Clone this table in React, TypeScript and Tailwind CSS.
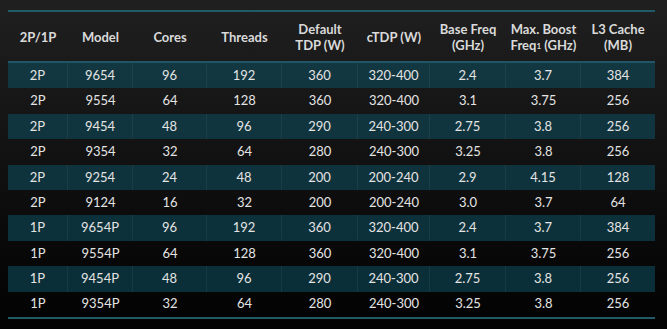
import React from 'react';

// column widths in px, left to right
const widths = [60, 65, 74, 75, 76, 72, 76, 75, 74];

const rows: string[][] = [
  ['2P', '9654', '96', '192', '360', '320-400', '2.4', '3.7', '384'],
  ['2P', '9554', '64', '128', '360', '320-400', '3.1', '3.75', '256'],
  ['2P', '9454', '48', '96', '290', '240-300', '2.75', '3.8', '256'],
  ['2P', '9354', '32', '64', '280', '240-300', '3.25', '3.8', '256'],
  ['2P', '9254', '24', '48', '200', '200-240', '2.9', '4.15', '128'],
  ['2P', '9124', '16', '32', '200', '200-240', '3.0', '3.7', '64'],
  ['1P', '9654P', '96', '192', '360', '320-400', '2.4', '3.7', '384'],
  ['1P', '9554P', '64', '128', '360', '320-400', '3.1', '3.75', '256'],
  ['1P', '9454P', '48', '96', '290', '240-300', '2.75', '3.8', '256'],
  ['1P', '9354P', '32', '64', '280', '240-300', '3.25', '3.8', '256'],
];

const headers: React.ReactNode[] = [
  '2P/1P',
  'Model',
  'Cores',
  'Threads',
  <>Default<br />TDP (W)</>,
  'cTDP (W)',
  <>Base Freq<br />(GHz)</>,
  <>Max. Boost<br />Freq<sup className="text-[8px] relative -top-[1px]">1</sup> (GHz)</>,
  <>L3 Cache<br />(MB)</>,
];

export default function App() {
  return (
    <div
      className="w-[667px] h-[329px] overflow-hidden bg-linear-to-b from-[#202020] via-[#111111] to-[#030303] pl-2 pt-[10px]"
      style={{ fontFamily: 'Lato, "Open Sans", sans-serif' }}
    >
      <div className="w-[647px]">
        <div className="h-[2px] bg-[#1f5a66]" />

        {/* header */}
        <div className="flex h-[51px] items-center border-b-2 border-[#1f5766]">
          {headers.map((h, i) => (
            <div
              key={i}
              style={{ width: widths[i] }}
              className="text-center text-[13px] font-bold leading-[16px] text-[#dadada]"
            >
              {h}
            </div>
          ))}
        </div>

        {/* body */}
        {rows.map((row, r) => {
          const teal = r % 2 === 0;
          return (
            <div
              key={r}
              className={`flex h-[25.4px] items-center ${teal ? 'bg-[#0f4b5a]/60' : ''}`}
            >
              {row.map((cell, c) => (
                <div
                  key={c}
                  style={{ width: widths[c] }}
                  className={`flex h-full items-center justify-center text-[13px] text-[#e4e4e4] ${
                    teal && c < 8 ? 'border-r border-white/5' : ''
                  }`}
                >
                  {cell}
                </div>
              ))}
            </div>
          );
        })}

        <div className="h-[2px] bg-[#1f5a66]" />
      </div>
    </div>
  );
}
